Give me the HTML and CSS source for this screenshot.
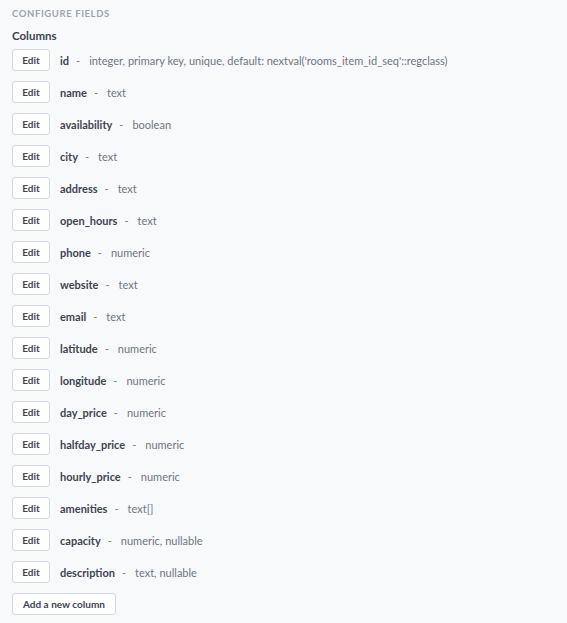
FILE: index.html
```html
<!DOCTYPE html>
<html>
<head>
<meta charset="utf-8">
<link rel="stylesheet" href="styles.css">
</head>
<body>
<div class="panel">
  <div class="section-title">Configure fields</div>
  <div class="subtitle">Columns</div>
  <ul class="cols">
    <li class="col"><button class="btn">Edit</button><span class="name">id</span><span class="sep">-</span><span class="type">integer, primary key, unique, default: nextval('rooms_item_id_seq'::regclass)</span></li>
    <li class="col"><button class="btn">Edit</button><span class="name">name</span><span class="sep">-</span><span class="type">text</span></li>
    <li class="col"><button class="btn">Edit</button><span class="name">availability</span><span class="sep">-</span><span class="type">boolean</span></li>
    <li class="col"><button class="btn">Edit</button><span class="name">city</span><span class="sep">-</span><span class="type">text</span></li>
    <li class="col"><button class="btn">Edit</button><span class="name">address</span><span class="sep">-</span><span class="type">text</span></li>
    <li class="col"><button class="btn">Edit</button><span class="name">open_hours</span><span class="sep">-</span><span class="type">text</span></li>
    <li class="col"><button class="btn">Edit</button><span class="name">phone</span><span class="sep">-</span><span class="type">numeric</span></li>
    <li class="col"><button class="btn">Edit</button><span class="name">website</span><span class="sep">-</span><span class="type">text</span></li>
    <li class="col"><button class="btn">Edit</button><span class="name">email</span><span class="sep">-</span><span class="type">text</span></li>
    <li class="col"><button class="btn">Edit</button><span class="name">latitude</span><span class="sep">-</span><span class="type">numeric</span></li>
    <li class="col"><button class="btn">Edit</button><span class="name">longitude</span><span class="sep">-</span><span class="type">numeric</span></li>
    <li class="col"><button class="btn">Edit</button><span class="name">day_price</span><span class="sep">-</span><span class="type">numeric</span></li>
    <li class="col"><button class="btn">Edit</button><span class="name">halfday_price</span><span class="sep">-</span><span class="type">numeric</span></li>
    <li class="col"><button class="btn">Edit</button><span class="name">hourly_price</span><span class="sep">-</span><span class="type">numeric</span></li>
    <li class="col"><button class="btn">Edit</button><span class="name">amenities</span><span class="sep">-</span><span class="type">text[]</span></li>
    <li class="col"><button class="btn">Edit</button><span class="name">capacity</span><span class="sep">-</span><span class="type">numeric, nullable</span></li>
    <li class="col"><button class="btn">Edit</button><span class="name">description</span><span class="sep">-</span><span class="type">text, nullable</span></li>
  </ul>
  <button class="btn add">Add a new column</button>
</div>
</body>
</html>
```
FILE: styles.css
```css
html, body {
  margin: 0;
  padding: 0;
  background: #f8f9fb;
}
body {
  font-family: Lato, "Open Sans", sans-serif;
  color: #3d4553;
}
.panel {
  padding: 7px 12px 0 12px;
  display: flex;
  flex-direction: column;
  align-items: flex-start;
}
.section-title {
  font-size: 9.5px;
  font-weight: 700;
  letter-spacing: 0.6px;
  text-transform: uppercase;
  color: #9aa4b3;
  line-height: 14px;
}
.subtitle {
  margin-top: 8px;
  font-size: 11.5px;
  font-weight: 700;
  color: #3a4352;
  line-height: 14px;
}
.cols {
  list-style: none;
  margin: 6px 0 0 0;
  padding: 0;
  display: flex;
  flex-direction: column;
  gap: 10px;
}
.col {
  display: flex;
  align-items: center;
  height: 22px;
  font-size: 11px;
}
.btn {
  box-sizing: border-box;
  height: 22px;
  width: 38px;
  padding: 0;
  border: 1px solid #d4dae3;
  border-radius: 3px;
  background: #ffffff;
  font-family: inherit;
  font-size: 10px;
  font-weight: 700;
  color: #3d4553;
}
.name {
  margin-left: 10px;
  font-weight: 700;
  color: #3d4553;
}
.sep {
  margin: 0 9px 0 7px;
  color: #6d7683;
}
.type {
  color: #6d7683;
}
.btn.add {
  width: auto;
  padding: 0 10px;
  margin-top: 10px;
}
```
